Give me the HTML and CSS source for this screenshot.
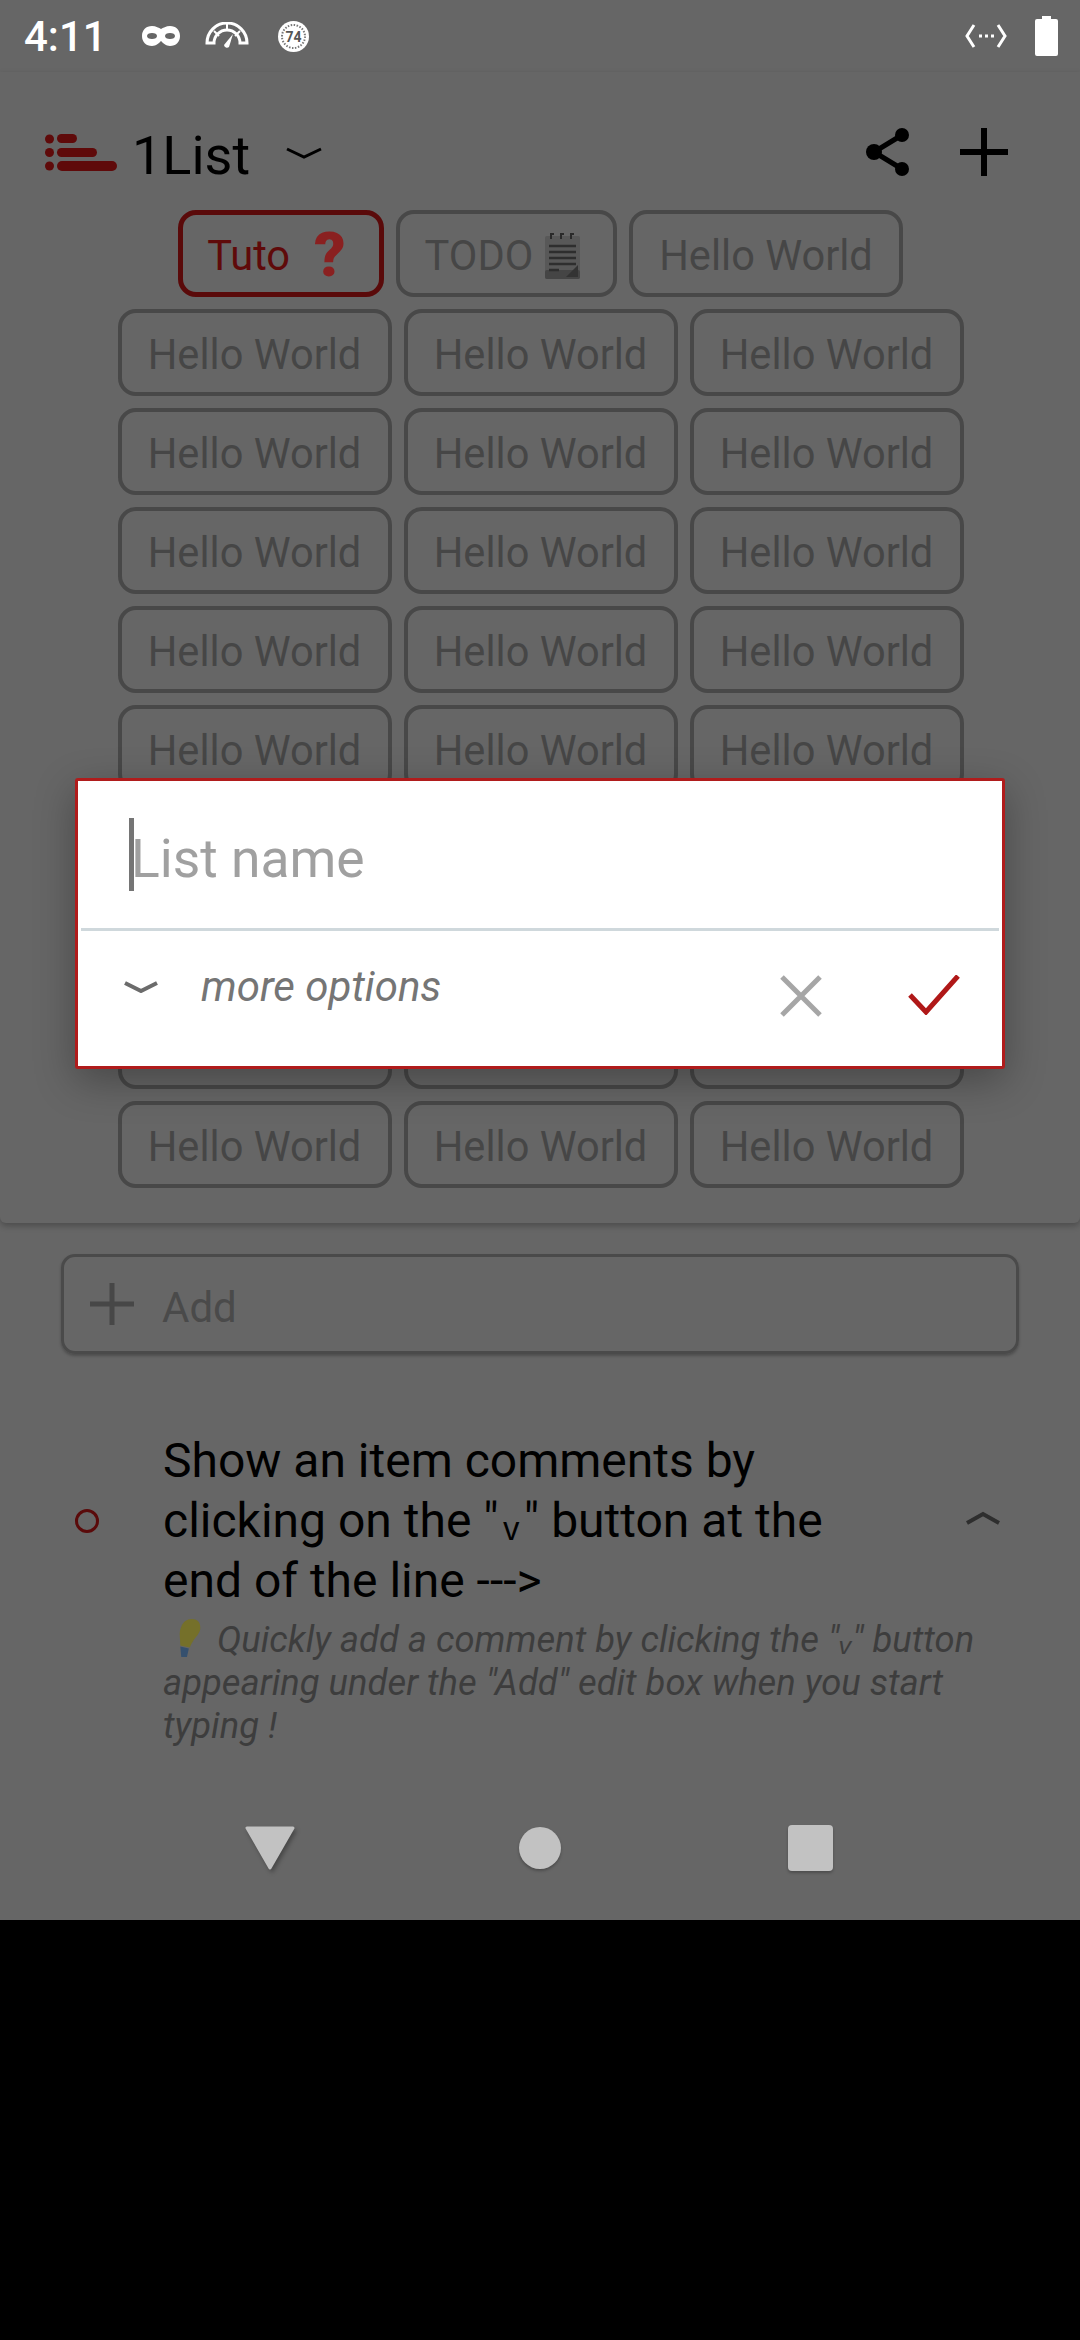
FILE: index.html
```html
<!DOCTYPE html>
<html lang="en">
<head>
<meta charset="UTF-8">
<meta name="viewport" content="width=device-width, initial-scale=1.0">
<title>1List</title>
<link rel="stylesheet" href="styles.css">
</head>
<body>
<div class="screen">
    <div class="status-bar">
        <span class="time">4:11</span>
        <svg class="ic-mask" width="38" height="20" viewBox="0 0 38 20"><path fill="#fff" fill-rule="evenodd" d="M10 0C14 0 17 2 19 3C21 2 24 0 28 0C34 0 38 4 38 10C38 16 34 20 28 20C24 20 21 17 19 15C17 17 14 20 10 20C4 20 0 16 0 10C0 4 4 0 10 0ZM10 7C7 7 5 8 5 10C5 12 7 13 10 13C13 13 15 12 15 10C15 8 13 7 10 7ZM28 7C25 7 23 8 23 10C23 12 25 13 28 13C31 13 33 12 33 10C33 8 31 7 28 7Z"/></svg>
        <svg class="ic-gauge" width="44" height="28" viewBox="0 0 44 28"><path fill="none" stroke="#fff" stroke-width="3" d="M2 21A20 20 0 0 1 42 21H35A13 13 0 0 0 9 21Z"/><path stroke="#fff" stroke-width="2" d="M9 9L14 14M22 2V9M35 9L30 14"/><path fill="#fff" d="M28 12L24 25A3 3 0 0 1 19 23Z"/></svg>
        <svg class="badge" width="31" height="31" viewBox="0 0 31 31"><circle cx="15.500" cy="15.500" r="15.500" fill="#fff"/><circle cx="15.500" cy="15.500" r="11.500" fill="none" stroke="#777" stroke-width="2" stroke-dasharray="1.500 1.500"/><text x="15.500" y="21" text-anchor="middle" class="badge-num">74</text></svg>
        <span class="status-right">
            <svg width="42" height="26" viewBox="0 0 42 26"><path fill="none" stroke="#fff" stroke-width="3" d="M9 2L2 13L9 24M33 2L40 13L33 24"/><path stroke="#fff" stroke-width="3" stroke-dasharray="3 3" d="M14 13H29"/></svg>
            <svg width="23" height="40" viewBox="0 0 23 40"><path fill="#fff" d="M7 0H16V3H21A2 2 0 0 1 23 5V38A2 2 0 0 1 21 40H2A2 2 0 0 1 0 38V5A2 2 0 0 1 2 3H7Z"/></svg>
        </span>
    </div>

    <section class="panel">
        <header class="app-head">
            <svg class="logo" width="72" height="37" viewBox="0 0 72 37"><g fill="#5f0a0a"><circle cx="4.500" cy="5" r="4.500"/><circle cx="4.500" cy="18.500" r="4.500"/><circle cx="4.500" cy="32" r="4.500"/><rect x="12" y="0" width="20" height="9" rx="4.500"/><rect x="12" y="14" width="40" height="9" rx="4.500"/><rect x="12" y="27" width="60" height="10" rx="5"/></g></svg>
            <span class="app-name">1List</span>
            <svg class="caret" width="36" height="13" viewBox="0 0 36 13"><path fill="none" stroke="#000" stroke-width="3" d="M1 2L18 10L35 2"/></svg>
            <span class="head-actions">
                <svg width="44" height="48" viewBox="0 0 44 48"><path fill="none" stroke="#000" stroke-width="5" d="M36 7L8 24L36 41"/><circle cx="36" cy="7" r="7"/><circle cx="8" cy="24" r="8"/><circle cx="36" cy="41" r="7"/></svg>
                <svg width="48" height="48" viewBox="0 0 48 48"><path stroke="#000" stroke-width="6" d="M24 0V48M0 24H48"/></svg>
            </span>
        </header>

        <div class="chips">
            <div class="chip-row">
                <span class="chip chip-active">Tuto <b class="qmark">?</b></span>
                <span class="chip chip-todo">TODO
                    <svg width="35" height="47" viewBox="0 0 35 47"><rect y="4" width="35" height="43" rx="2" fill="#585858"/><rect y="38" width="35" height="9" rx="2" fill="#454545"/><path fill="none" stroke="#2a2a2a" stroke-width="2" d="M6 7V2H9M16 7V2H19M26 7V2H29"/><path stroke="#2e2e2e" stroke-width="2.500" d="M4 14H31M4 20H31M4 26H31M4 32H31M4 38H14"/><path fill="#333" d="M33 33V45H21Z"/></svg>
                </span>
                <span class="chip">Hello World</span>
            </div>
            <div class="chip-row"><span class="chip">Hello World</span><span class="chip">Hello World</span><span class="chip">Hello World</span></div>
            <div class="chip-row"><span class="chip">Hello World</span><span class="chip">Hello World</span><span class="chip">Hello World</span></div>
            <div class="chip-row"><span class="chip">Hello World</span><span class="chip">Hello World</span><span class="chip">Hello World</span></div>
            <div class="chip-row"><span class="chip">Hello World</span><span class="chip">Hello World</span><span class="chip">Hello World</span></div>
            <div class="chip-row"><span class="chip">Hello World</span><span class="chip">Hello World</span><span class="chip">Hello World</span></div>
            <!-- these three rows sit behind the dialog -->
            <div class="chip-row"><span class="chip"></span><span class="chip"></span><span class="chip"></span></div>
            <div class="chip-row"><span class="chip"></span><span class="chip"></span><span class="chip"></span></div>
            <div class="chip-row"><span class="chip"></span><span class="chip"></span><span class="chip"></span></div>
            <div class="chip-row"><span class="chip">Hello World</span><span class="chip">Hello World</span><span class="chip">Hello World</span></div>
        </div>
    </section>

    <div class="add-box">
        <svg width="44" height="42" viewBox="0 0 44 42"><path stroke="#474747" stroke-width="5" d="M22 0V42M0 21H44"/></svg>
        <span class="add-label">Add</span>
    </div>

    <div class="item">
        <span class="item-dot"></span>
        <div class="item-title">Show an item comments by clicking on the "&#8202;ᵥ&#8202;" button at the end of the line ---&gt;</div>
        <svg class="item-toggle" width="36" height="14" viewBox="0 0 36 14"><path fill="none" stroke="#2e2e2e" stroke-width="4" d="M2 12L18 3L34 12"/></svg>
    </div>
    <p class="item-comment"><svg class="bulb" width="34" height="40" viewBox="0 0 36 40"><path fill="#75702a" d="M24 0C31 0 34 5 33 11C32 17 26 20 22 30L12 28C12 20 10 14 13 8C15 3 19 0 24 0Z"/><path fill="#35506e" d="M12 29L21 31L19 40H13Z"/></svg> Quickly add a comment by clicking the "ᵥ" button appearing under the "Add" edit box when you start typing !</p>

    <nav class="nav-bar">
        <svg class="nav-back" width="50" height="44" viewBox="0 0 50 44"><path fill="#c2c2c2" stroke="#c2c2c2" stroke-width="3" stroke-linejoin="round" d="M2 2H48L25 42Z"/></svg>
        <span class="nav-circle"></span>
        <span class="nav-square"></span>
    </nav>

    <div class="dialog">
        <div class="dialog-input"><span class="text-caret"></span><span class="dialog-placeholder">List name</span></div>
        <div class="dialog-foot">
            <svg width="34" height="12" viewBox="0 0 34 12"><path fill="none" stroke="#6b6b6b" stroke-width="4" d="M1 2L17 10L33 2"/></svg>
            <span class="more-options">more options</span>
            <svg class="ic-close" width="42" height="42" viewBox="0 0 42 42"><path stroke="#a6a6a6" stroke-width="5" d="M2 2L40 40M40 2L2 40"/></svg>
            <svg class="ic-ok" width="52" height="40" viewBox="0 0 52 40"><path fill="none" stroke="#b01818" stroke-width="5" d="M2 20L18 37L50 1"/></svg>
        </div>
    </div>
</div>
</body>
</html>
```

FILE: styles.css
```css
* {
    box-sizing: border-box;
}

html, body {
    margin: 0;
    background-color: #000;
}

body {
    font-family: Roboto, sans-serif;
    width: 1080px;
    height: 2340px;
    overflow: hidden;
}

.screen {
    position: relative;
    display: flex;
    flex-direction: column;
    width: 1080px;
    height: 1920px;
    background-color: #666;
}

/* status bar */
.status-bar {
    display: flex;
    align-items: center;
    height: 72px;
    padding: 0 22px 0 24px;
    color: #fff;
}

.time {
    font-size: 42px;
    font-weight: 500;
    width: 118px;
}

.ic-mask {
    margin-right: 25px;
}

.ic-gauge {
    margin-right: 29px;
}

.badge-num {
    font-size: 14px;
    font-weight: 700;
    fill: #555;
}

.status-right {
    margin-left: auto;
    display: flex;
    align-items: center;
    gap: 28px;
}

/* list panel */
.panel {
    height: 1151px;
    box-shadow: 0 3px 6px rgba(0, 0, 0, 0.25);
    border-radius: 0 0 6px 6px;
}

.app-head {
    display: flex;
    align-items: center;
    height: 138px;
    padding: 22px 72px 0 45px;
}

.app-name {
    font-size: 54px;
    color: #000;
    margin-left: 15px;
    margin-top: 6px;
}

.caret {
    margin-left: 36px;
    margin-top: 2px;
}

.head-actions {
    margin-left: auto;
    display: flex;
    align-items: center;
    gap: 50px;
}

.chips {
    display: flex;
    flex-direction: column;
    gap: 12px;
    padding-left: 1px;
}

.chip-row {
    display: flex;
    justify-content: center;
    gap: 12px;
}

.chip {
    display: flex;
    align-items: center;
    justify-content: center;
    gap: 8px;
    width: 274px;
    height: 87px;
    padding-top: 3px;
    border: 4px solid #484848;
    border-radius: 18px;
    font-size: 41.600px;
    color: #464646;
}

.chip-active {
    width: 206px;
    border: 5px solid #5a0a0a;
    color: #5f0a0a;
    gap: 24px;
    padding: 3px 9px 0 0;
}

.qmark {
    font-size: 62px;
    line-height: 60px;
    font-weight: 900;
    color: #8a2020;
}

.chip-todo {
    width: 221px;
    gap: 12px;
    padding-right: 8px;
}

/* add box */
.add-box {
    display: flex;
    align-items: center;
    gap: 28px;
    height: 100px;
    margin: 31px 61px 0;
    padding: 0 26px;
    border: 3px solid #4a4a4a;
    border-radius: 14px;
    box-shadow: 0 2px 3px rgba(0, 0, 0, 0.25);
}

.add-label {
    font-size: 42px;
    color: #4a4a4a;
    margin-top: 6px;
}

/* item */
.item {
    display: flex;
    align-items: center;
    margin-top: 77px;
    padding-left: 75px;
}

.item-dot {
    width: 24px;
    height: 24px;
    border: 3px solid #5a0a0a;
    border-radius: 50%;
    margin-right: 64px;
}

.item-title {
    width: 700px;
    font-size: 48px;
    line-height: 60px;
    color: #000;
}

.item-toggle {
    margin-left: auto;
    margin-right: 79px;
    margin-top: -6px;
}

.item-comment {
    margin: 7px 60px 0 163px;
    font-size: 36.400px;
    font-style: italic;
    line-height: 43px;
    color: #3d3d3d;
}

.bulb {
    vertical-align: -6px;
    margin: 0 5px 0 6px;
}

/* nav bar */
.nav-bar {
    display: grid;
    grid-template-columns: repeat(3, 270px);
    justify-items: center;
    align-items: center;
    height: 144px;
    margin-top: auto;
    padding: 0 135px;
}

.nav-back {
    filter: drop-shadow(2px 3px 2px rgba(0, 0, 0, 0.3));
}

.nav-circle {
    width: 42px;
    height: 42px;
    border-radius: 50%;
    background-color: #c2c2c2;
    box-shadow: 0 2px 3px rgba(0, 0, 0, 0.25);
}

.nav-square {
    width: 45px;
    height: 46px;
    border-radius: 4px;
    background-color: #c2c2c2;
    box-shadow: 0 2px 3px rgba(0, 0, 0, 0.25);
}

/* list name dialog */
.dialog {
    position: absolute;
    left: 75px;
    top: 778px;
    width: 930px;
    height: 291px;
    background-color: #fff;
    border: 3px solid #b01c1c;
    border-radius: 3px;
    box-shadow: 0 12px 40px rgba(0, 0, 0, 0.3);
}

.dialog-input {
    display: flex;
    align-items: center;
    height: 150px;
    margin: 0 3px;
    padding-left: 48px;
    border-bottom: 3px solid #cfd8dc;
}

.text-caret {
    width: 5px;
    height: 73px;
    margin-right: -3px;
    background-color: #757575;
}

.dialog-placeholder {
    font-size: 53.400px;
    color: #a0a0a0;
    margin-top: 8px;
}

.dialog-foot {
    display: flex;
    align-items: flex-start;
    padding: 44px 0 0 46px;
}

.dialog-foot > svg:first-child {
    margin-top: 6px;
}

.more-options {
    font-size: 42px;
    font-style: italic;
    color: #757575;
    margin-left: 43px;
    margin-top: -13px;
}

.ic-close {
    margin-left: auto;
}

.ic-ok {
    margin-left: 86px;
    margin-right: 42px;
}
```
